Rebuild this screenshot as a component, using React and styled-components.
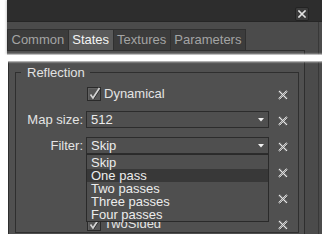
import React, { useId } from 'react';
import styled, { createGlobalStyle } from 'styled-components';

const GlobalStyle = createGlobalStyle`
  html, body { margin: 0; padding: 0; background: #ffffff; }
  body {
    font-family: "Liberation Sans", Arial, sans-serif;
    font-size: 13px;
    overflow: hidden;
  }
  * { box-sizing: border-box; }
`;

const Stage = styled.div`
  width: 322px;
  height: 246px;
  display: flex;
  flex-direction: column;
  overflow: hidden;
  background: #ffffff;
`;

const TopShot = styled.div`
  margin-left: 7px;
  height: 55px;
  flex: none;
  display: flex;
  flex-direction: column;
  background: #4b4b4b;
  overflow: hidden;
  box-shadow: -1px 0 2px rgba(0, 0, 0, 0.18);
`;

const TitleBar = styled.div`
  height: 22px;
  flex: none;
  background: #2d2d2d;
  border-bottom: 1px solid #262626;
  display: flex;
  justify-content: flex-end;
  align-items: flex-start;
  padding: 7px 13px 0 0;
`;

const CloseButton = styled.div`
  width: 14px;
  height: 14px;
  border: 1px solid #232323;
  border-radius: 2px;
  background: #3b3b3b;
  display: grid;
  place-items: center;
`;

const WindowBody = styled.div`
  flex: 1;
  display: flex;
  flex-direction: column;
  margin-right: 3px;
  border-right: 1px solid #383838;
`;

const TabBar = styled.div`
  display: flex;
  padding-top: 7px;
  flex: none;
`;

const Tab = styled.div`
  height: 21px;
  padding: 0 3.5px;
  line-height: 20px;
  border: 1px solid #303030;
  border-bottom: none;
  background: ${(p) => (p.$active ? '#5a5a5a' : '#3c3c3c')};
  color: ${(p) => (p.$active ? '#f4f4f4' : '#a4a4a4')};
  white-space: nowrap;
  & + & { border-left: none; }
`;

const TopPanel = styled.div`
  flex: 1;
  margin-right: 13px;
  background: #505050;
  border-top: 1px solid #2e2e2e;
  border-right: 1px solid #2e2e2e;
`;

const Band = styled.div`
  height: 6px;
  flex: none;
  background: #ffffff;
  position: relative;
  z-index: 2;
  box-shadow: 0 0 2px 1px rgba(255, 255, 255, 0.85);
`;

const LowerShot = styled.div`
  margin-left: 8px;
  height: 173px;
  flex: none;
  display: flex;
  padding-right: 3px;
  border-top: 1px solid #2e2e2e;
  background: #4b4b4b;
  overflow: hidden;
`;

const Panel = styled.div`
  width: 297px;
  flex: none;
  background: #505050;
  border-left: 1px solid #2e2e2e;
  border-right: 1px solid #2e2e2e;
  padding: 4px 5px 0 6px;
`;

const Gutter = styled.div`
  flex: 1;
  border-right: 1px solid #383838;
`;

const GroupBox = styled.fieldset`
  margin: 0;
  min-width: 0;
  border: 1px solid #2f2f2f;
  padding: 6px 9px 0 0;
`;

const GroupTitle = styled.legend`
  margin-left: 5px;
  padding: 0 5px 0 6px;
  line-height: 13px;
  font-size: 13px;
  color: #e2e2e2;
`;

const Form = styled.div`
  display: grid;
  grid-template-columns: 70px 183px 19px;
  grid-auto-rows: 17px;
  row-gap: 9px;
  align-items: center;
`;

const Label = styled.div`
  grid-column: 1;
  text-align: right;
  padding-right: 3px;
  line-height: 17px;
  color: #e4e4e4;
  white-space: nowrap;
`;

const CheckField = styled.div`
  grid-column: 2;
  display: flex;
  align-items: center;
  gap: 3px;
  padding-left: 1px;
  color: #e4e4e4;
  white-space: nowrap;
`;

const Box = styled.div`
  width: 14px;
  height: 14px;
  flex: none;
  border: 1px solid #2a2a2a;
  background: #565656;
  box-shadow: inset 1px 1px 0 #626262;
  position: relative;
  display: grid;
  place-items: center;
`;

const Combo = styled.div`
  grid-column: 2;
  position: relative;
  height: 17px;
  border: 1px solid #2c2c2c;
  background: #4f4f4f;
  display: flex;
  align-items: center;
  justify-content: space-between;
  padding: 0 4px;
  line-height: 15px;
  color: #ececec;
`;

const DropList = styled.div`
  position: absolute;
  top: calc(100% + 1px);
  left: -1px;
  right: -1px;
  border: 1px solid #2a2a2a;
  background: #4f4f4f;
  padding-top: 1px;
  z-index: 5;
`;

const Item = styled.div`
  height: 13px;
  line-height: 13px;
  padding-left: 4px;
  color: #ececec;
  background: ${(p) => (p.$active ? '#383838' : 'transparent')};
  white-space: nowrap;
`;

const ResetSlot = styled.div`
  grid-column: 3;
  justify-self: end;
  width: 10px;
  height: 10px;
  margin-top: 3px;
  display: flex;
`;

function CloseGlyph() {
  return (
    <svg width="8" height="8" viewBox="0 0 8 8">
      <path d="M1 1 L7 7 M7 1 L1 7" stroke="#e2e2e2" strokeWidth="1.6" strokeLinecap="square" />
    </svg>
  );
}

function ResetX() {
  const id = useId().replace(/:/g, '');
  return (
    <ResetSlot>
      <svg width="10" height="10" viewBox="0 0 10 10" style={{ overflow: 'visible' }}>
        <defs>
          <pattern id={`chk${id}`} width="2" height="2" patternUnits="userSpaceOnUse">
            <rect width="2" height="2" fill="#8e8e8e" />
            <rect width="1" height="1" fill="#e6e6e6" />
            <rect x="1" y="1" width="1" height="1" fill="#e6e6e6" />
          </pattern>
        </defs>
        <path d="M1.5 2 L9 9.5 M9 2 L1.5 9.5" stroke="#2c2c2c" strokeWidth="1.4" />
        <path d="M1 1 L9 9 M9 1 L1 9" stroke={`url(#chk${id})`} strokeWidth="2" />
      </svg>
    </ResetSlot>
  );
}

function Check({ checked }) {
  return (
    <Box>
      {checked && (
        <svg width="14" height="14" viewBox="0 0 14 14" style={{ position: 'absolute', left: -1, top: -1, overflow: 'visible' }}>
          <path d="M3.5 7.5 L6 11 L12.5 1" fill="none" stroke="#262626" strokeWidth="1.2" transform="translate(0.7 0.7)" />
          <path d="M3.5 7.5 L6 11 L12.5 1" fill="none" stroke="#d4d4d4" strokeWidth="1.7" />
        </svg>
      )}
    </Box>
  );
}

function Arrow() {
  return (
    <svg width="6" height="4" viewBox="0 0 6 4">
      <path d="M0 0 L6 0 L3 3.5 Z" fill="#f2f2f2" />
    </svg>
  );
}

const filterOptions = ['Skip', 'One pass', 'Two passes', 'Three passes', 'Four passes'];

export default function App() {
  return (
    <>
      <GlobalStyle />
      <Stage>
        <TopShot>
          <TitleBar>
            <CloseButton>
              <CloseGlyph />
            </CloseButton>
          </TitleBar>
          <WindowBody>
            <TabBar>
              <Tab>Common</Tab>
              <Tab $active>States</Tab>
              <Tab>Textures</Tab>
              <Tab>Parameters</Tab>
            </TabBar>
            <TopPanel />
          </WindowBody>
        </TopShot>
        <Band />
        <LowerShot>
          <Panel>
            <GroupBox>
              <GroupTitle>Reflection</GroupTitle>
              <Form>
                <CheckField>
                  <Check checked />
                  Dynamical
                </CheckField>
                <ResetX />

                <Label>Map size:</Label>
                <Combo>
                  <span>512</span>
                  <Arrow />
                </Combo>
                <ResetX />

                <Label>Filter:</Label>
                <Combo>
                  <span>Skip</span>
                  <Arrow />
                  <DropList>
                    {filterOptions.map((o) => (
                      <Item key={o} $active={o === 'One pass'}>
                        {o}
                      </Item>
                    ))}
                  </DropList>
                </Combo>
                <ResetX />

                <CheckField>
                  <Check />
                </CheckField>
                <ResetX />

                <CheckField>
                  <Check />
                </CheckField>
                <ResetX />

                <CheckField>
                  <Check checked />
                  TwoSided
                </CheckField>
                <ResetX />
              </Form>
            </GroupBox>
          </Panel>
          <Gutter />
        </LowerShot>
      </Stage>
    </>
  );
}
